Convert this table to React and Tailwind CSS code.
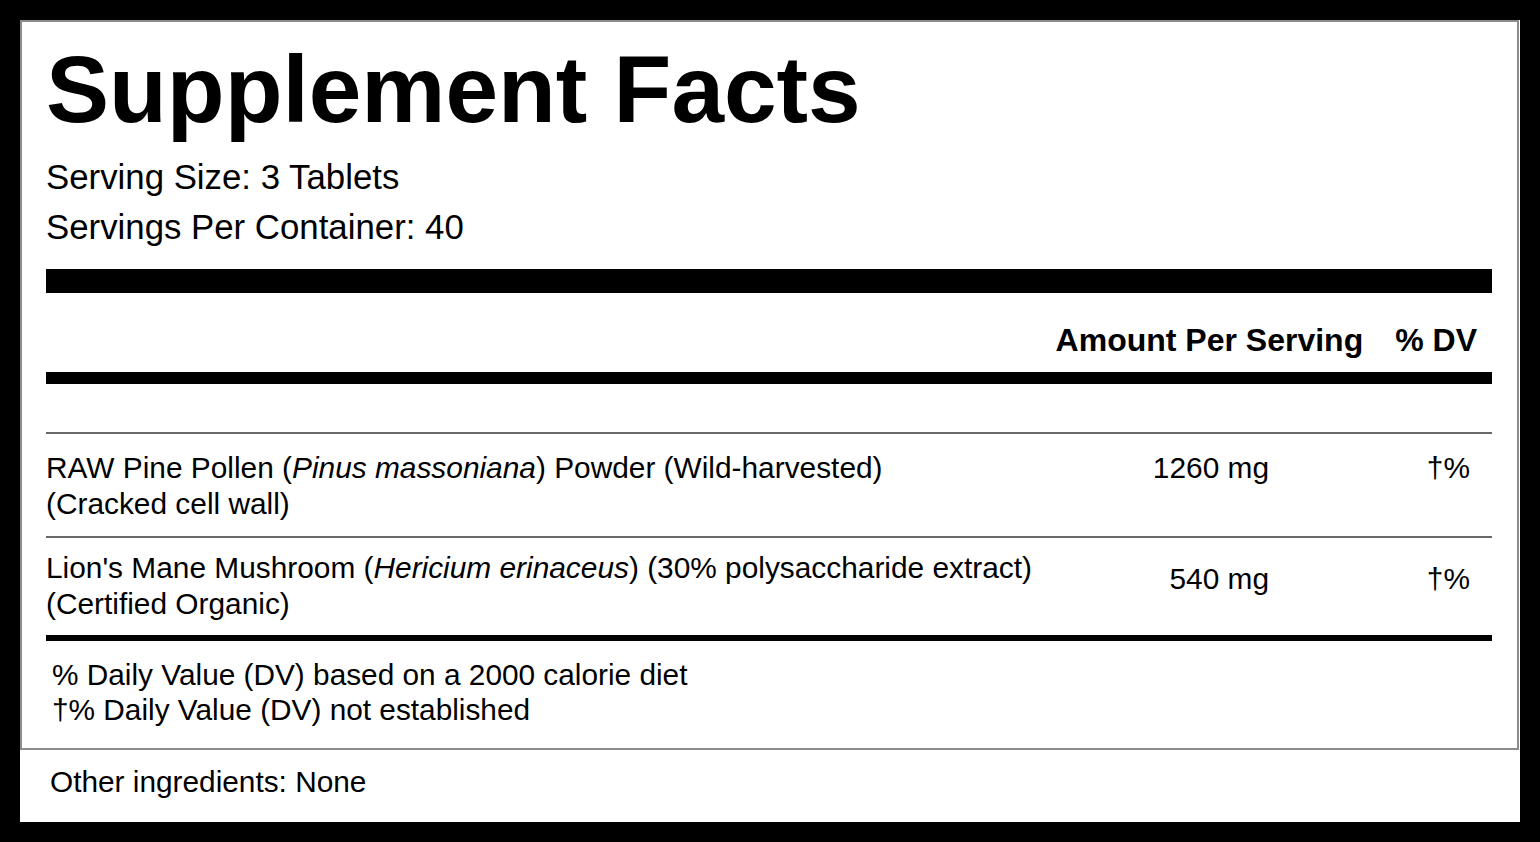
import React from 'react';

const rows = [
  {
    name: (
      <>
        RAW Pine Pollen (<i>Pinus massoniana</i>) Powder (Wild-harvested)
        <br />
        (Cracked cell wall)
      </>
    ),
    amount: '1260 mg',
    pad: 'pt-[16px] pb-[14px]',
    amountPad: 'pt-0',
  },
  {
    name: (
      <>
        Lion's Mane Mushroom (<i>Hericium erinaceus</i>) (30% polysaccharide extract)
        <br />
        (Certified Organic)
      </>
    ),
    amount: '540 mg',
    pad: 'pt-[12px] pb-[13px]',
    amountPad: 'pt-[11px]',
  },
];

export default function App() {
  return (
    <div className="min-h-screen bg-black p-5 font-['Liberation_Sans',Arial,sans-serif] text-black">
      <div className="w-[1500px] h-[802px] bg-white flex flex-col">
        {/* Facts box */}
        <div className="h-[730px] mr-px border-2 border-[#8c8c8c] pt-[20px] pl-[24px] pr-[25px]">
          <h1 className="text-[94.6px] leading-[94px] font-bold">Supplement Facts</h1>

          <div className="mt-[16px] text-[34.8px] leading-[50px]">
            <p>Serving Size: 3 Tablets</p>
            <p>Servings Per Container: 40</p>
          </div>

          <div className="mt-[17px] h-[24px] bg-black" />

          {/* Column header */}
          <div className="mt-[27px] flex justify-end gap-[32px] pr-[15px] text-[32px] leading-[40px] font-bold">
            <span>Amount Per Serving</span>
            <span>% DV</span>
          </div>

          <div className="mt-[12px] h-[12px] bg-black" />
          <div className="mt-[48px] h-[2px] bg-[#6a6a6a]" />

          {/* Ingredients */}
          {rows.map((r, i) => (
            <div key={i}>
              <div className={`flex text-[29.85px] leading-[36px] ${r.pad}`}>
                <div className="flex-1">{r.name}</div>
                <div className={`w-[200px] text-right ${r.amountPad}`}>{r.amount}</div>
                <div className={`w-[223px] text-right pr-[22px] ${r.amountPad}`}>†%</div>
              </div>
              {i < rows.length - 1 && <div className="h-[2px] bg-[#6a6a6a]" />}
            </div>
          ))}

          <div className="h-[6px] bg-black" />

          <div className="pt-[16px] pl-[6px] text-[29.8px] leading-[35px]">
            <p>% Daily Value (DV) based on a 2000 calorie diet</p>
            <p>†% Daily Value (DV) not established</p>
          </div>
        </div>

        <p className="pt-[14px] pl-[30px] text-[29.8px] leading-[35px]">Other ingredients: None</p>
      </div>
    </div>
  );
}
